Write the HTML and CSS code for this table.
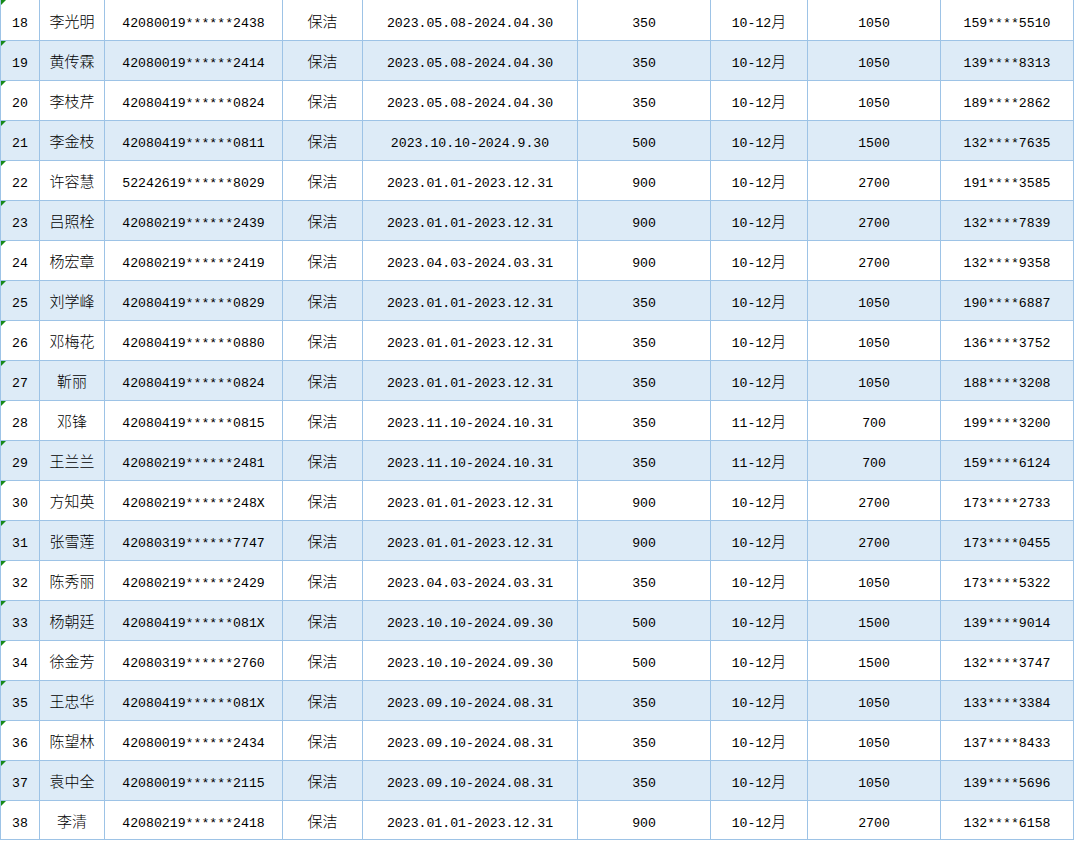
FILE: index.html
```html
<!DOCTYPE html>
<html lang="zh-CN">
<head>
    <meta charset="UTF-8">
    <meta name="viewport" content="width=device-width, initial-scale=1.0">
    <title>保洁人员补贴发放表</title>
    <link rel="stylesheet" href="styles.css">
</head>
<body>
    <table class="sheet">
        <colgroup>
            <col class="c-no">
            <col class="c-name">
            <col class="c-id">
            <col class="c-job">
            <col class="c-term">
            <col class="c-amount">
            <col class="c-month">
            <col class="c-total">
            <col class="c-phone">
        </colgroup>
        <tbody>
            <tr><td class="no">18</td><td class="cn">李光明</td><td>42080019******2438</td><td class="cn">保洁</td><td>2023.05.08-2024.04.30</td><td>350</td><td>10-12<span class="cn">月</span></td><td>1050</td><td>159****5510</td></tr>
            <tr><td class="no">19</td><td class="cn">黄传霖</td><td>42080019******2414</td><td class="cn">保洁</td><td>2023.05.08-2024.04.30</td><td>350</td><td>10-12<span class="cn">月</span></td><td>1050</td><td>139****8313</td></tr>
            <tr><td class="no">20</td><td class="cn">李枝芹</td><td>42080419******0824</td><td class="cn">保洁</td><td>2023.05.08-2024.04.30</td><td>350</td><td>10-12<span class="cn">月</span></td><td>1050</td><td>189****2862</td></tr>
            <tr><td class="no">21</td><td class="cn">李金枝</td><td>42080419******0811</td><td class="cn">保洁</td><td>2023.10.10-2024.9.30</td><td>500</td><td>10-12<span class="cn">月</span></td><td>1500</td><td>132****7635</td></tr>
            <tr><td class="no">22</td><td class="cn">许容慧</td><td>52242619******8029</td><td class="cn">保洁</td><td>2023.01.01-2023.12.31</td><td>900</td><td>10-12<span class="cn">月</span></td><td>2700</td><td>191****3585</td></tr>
            <tr><td class="no">23</td><td class="cn">吕照栓</td><td>42080219******2439</td><td class="cn">保洁</td><td>2023.01.01-2023.12.31</td><td>900</td><td>10-12<span class="cn">月</span></td><td>2700</td><td>132****7839</td></tr>
            <tr><td class="no">24</td><td class="cn">杨宏章</td><td>42080219******2419</td><td class="cn">保洁</td><td>2023.04.03-2024.03.31</td><td>900</td><td>10-12<span class="cn">月</span></td><td>2700</td><td>132****9358</td></tr>
            <tr><td class="no">25</td><td class="cn">刘学峰</td><td>42080419******0829</td><td class="cn">保洁</td><td>2023.01.01-2023.12.31</td><td>350</td><td>10-12<span class="cn">月</span></td><td>1050</td><td>190****6887</td></tr>
            <tr><td class="no">26</td><td class="cn">邓梅花</td><td>42080419******0880</td><td class="cn">保洁</td><td>2023.01.01-2023.12.31</td><td>350</td><td>10-12<span class="cn">月</span></td><td>1050</td><td>136****3752</td></tr>
            <tr><td class="no">27</td><td class="cn">靳丽</td><td>42080419******0824</td><td class="cn">保洁</td><td>2023.01.01-2023.12.31</td><td>350</td><td>10-12<span class="cn">月</span></td><td>1050</td><td>188****3208</td></tr>
            <tr><td class="no">28</td><td class="cn">邓锋</td><td>42080419******0815</td><td class="cn">保洁</td><td>2023.11.10-2024.10.31</td><td>350</td><td>11-12<span class="cn">月</span></td><td>700</td><td>199****3200</td></tr>
            <tr><td class="no">29</td><td class="cn">王兰兰</td><td>42080219******2481</td><td class="cn">保洁</td><td>2023.11.10-2024.10.31</td><td>350</td><td>11-12<span class="cn">月</span></td><td>700</td><td>159****6124</td></tr>
            <tr><td class="no">30</td><td class="cn">方知英</td><td>42080219******248X</td><td class="cn">保洁</td><td>2023.01.01-2023.12.31</td><td>900</td><td>10-12<span class="cn">月</span></td><td>2700</td><td>173****2733</td></tr>
            <tr><td class="no">31</td><td class="cn">张雪莲</td><td>42080319******7747</td><td class="cn">保洁</td><td>2023.01.01-2023.12.31</td><td>900</td><td>10-12<span class="cn">月</span></td><td>2700</td><td>173****0455</td></tr>
            <tr><td class="no">32</td><td class="cn">陈秀丽</td><td>42080219******2429</td><td class="cn">保洁</td><td>2023.04.03-2024.03.31</td><td>350</td><td>10-12<span class="cn">月</span></td><td>1050</td><td>173****5322</td></tr>
            <tr><td class="no">33</td><td class="cn">杨朝廷</td><td>42080419******081X</td><td class="cn">保洁</td><td>2023.10.10-2024.09.30</td><td>500</td><td>10-12<span class="cn">月</span></td><td>1500</td><td>139****9014</td></tr>
            <tr><td class="no">34</td><td class="cn">徐金芳</td><td>42080319******2760</td><td class="cn">保洁</td><td>2023.10.10-2024.09.30</td><td>500</td><td>10-12<span class="cn">月</span></td><td>1500</td><td>132****3747</td></tr>
            <tr><td class="no">35</td><td class="cn">王忠华</td><td>42080419******081X</td><td class="cn">保洁</td><td>2023.09.10-2024.08.31</td><td>350</td><td>10-12<span class="cn">月</span></td><td>1050</td><td>133****3384</td></tr>
            <tr><td class="no">36</td><td class="cn">陈望林</td><td>42080019******2434</td><td class="cn">保洁</td><td>2023.09.10-2024.08.31</td><td>350</td><td>10-12<span class="cn">月</span></td><td>1050</td><td>137****8433</td></tr>
            <tr><td class="no">37</td><td class="cn">袁中全</td><td>42080019******2115</td><td class="cn">保洁</td><td>2023.09.10-2024.08.31</td><td>350</td><td>10-12<span class="cn">月</span></td><td>1050</td><td>139****5696</td></tr>
            <tr><td class="no">38</td><td class="cn">李清</td><td>42080219******2418</td><td class="cn">保洁</td><td>2023.01.01-2023.12.31</td><td>900</td><td>10-12<span class="cn">月</span></td><td>2700</td><td>132****6158</td></tr>
        </tbody>
    </table>
</body>
</html>
```

FILE: styles.css
```css
body {
    margin: 0;
    background-color: #fff;
    font-family: "Liberation Mono", "Noto Sans CJK SC", monospace;
}
.sheet {
    border-collapse: separate;
    border-spacing: 0;
    table-layout: fixed;
    width: 1074px;
    border-left: 1px solid #9dc3e6;
    color: #000;
    font-size: 13.2px;
}
.c-no { width: 39px; }
.c-name { width: 65px; }
.c-id { width: 178px; }
.c-job { width: 80px; }
.c-term { width: 215px; }
.c-amount { width: 133px; }
.c-month { width: 97px; }
.c-total { width: 133px; }
.c-phone { width: 133px; }
.sheet td {
    box-sizing: border-box;
    height: 40px;
    padding: 7px 0 0 0;
    line-height: 20px;
    border-right: 1px solid #9dc3e6;
    border-bottom: 1px solid #9dc3e6;
    text-align: center;
    vertical-align: middle;
    white-space: nowrap;
    overflow: hidden;
}
.sheet td.cn {
    padding-top: 1px;
}
.sheet tr:first-child td {
    height: 41px;
}
.sheet tr:last-child td {
    height: 39px;
}
.sheet tr:nth-child(even) td {
    background-color: #ddebf7;
}
.cn {
    font-family: "Noto Sans CJK SC", sans-serif;
    font-size: 15px;
    font-weight: 300;
}
span.cn {
    line-height: 0;
}
/* green "number stored as text" mark */
.no {
    position: relative;
}
.no::before {
    content: "";
    position: absolute;
    top: 0;
    left: 0;
    border-top: 5px solid #178a17;
    border-right: 5px solid transparent;
}
```
